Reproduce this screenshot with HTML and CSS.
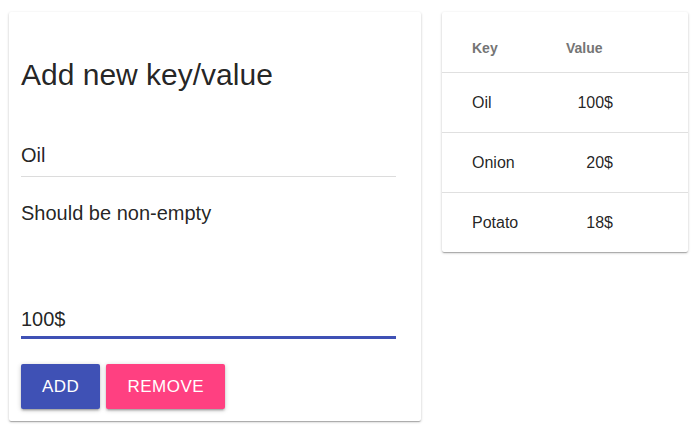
FILE: index.html
```html
<!DOCTYPE html>
<html>
<head>
<meta charset="utf-8">
<link rel="stylesheet" href="styles.css">
</head>
<body>
<div class="page">
  <section class="card form-card">
    <h2 class="title">Add new key/value</h2>
    <div class="field field-key">Oil</div>
    <div class="helper">Should be non-empty</div>
    <div class="field field-value">100$</div>
    <div class="actions">
      <button class="btn btn-add">ADD</button>
      <button class="btn btn-remove">REMOVE</button>
    </div>
  </section>
  <section class="card table-card">
    <table class="kv-table">
      <thead>
        <tr><th class="col-key">Key</th><th class="col-value">Value</th><th class="col-rest"></th></tr>
      </thead>
      <tbody>
        <tr><td class="col-key">Oil</td><td class="col-value num">100$</td><td class="col-rest"></td></tr>
        <tr><td class="col-key">Onion</td><td class="col-value num">20$</td><td class="col-rest"></td></tr>
        <tr><td class="col-key">Potato</td><td class="col-value num">18$</td><td class="col-rest"></td></tr>
      </tbody>
    </table>
  </section>
</div>
</body>
</html>
```

FILE: styles.css
```css
html, body {
  margin: 0;
  padding: 0;
  background: #ffffff;
}
body {
  font-family: "Liberation Sans", Arial, sans-serif;
  color: rgba(0, 0, 0, 0.87);
}
.page {
  display: flex;
  align-items: flex-start;
  gap: 21px;
  padding: 12px 9px;
}
.card {
  background: #fff;
  border-radius: 2px;
  box-shadow: 0 1px 3px rgba(0,0,0,0.2), 0 1px 1px rgba(0,0,0,0.14), 0 2px 1px -1px rgba(0,0,0,0.12);
}
.form-card {
  width: 412px;
  box-sizing: border-box;
  padding: 12px 25px 12px 12px;
}
.title {
  margin: 33px 0 0;
  font-size: 30px;
  font-weight: 400;
  line-height: 36px;
}
.field {
  font-size: 20px;
  line-height: 24px;
}
.field-key {
  margin-top: 50px;
  padding-bottom: 9px;
  border-bottom: 1px solid #dcdcdc;
}
.helper {
  margin-top: 24px;
  font-size: 20px;
  line-height: 24px;
}
.field-value {
  margin-top: 82px;
  padding-bottom: 5px;
  border-bottom: 3px solid #3f51b5;
}
.actions {
  display: flex;
  gap: 6px;
  margin-top: 25px;
}
.btn {
  height: 45px;
  padding: 0 21px;
  border: none;
  border-radius: 2px;
  color: #fff;
  font-family: "Liberation Sans", Arial, sans-serif;
  font-size: 17px;
  letter-spacing: 0.5px;
  box-shadow: 0 1px 5px rgba(0,0,0,0.2), 0 2px 2px rgba(0,0,0,0.14), 0 3px 1px -2px rgba(0,0,0,0.12);
}
.btn-add { background: #3f51b5; }
.btn-remove { background: #ff4081; }

.table-card {
  width: 246px;
  padding-top: 12px;
}
.kv-table {
  width: 100%;
  border-collapse: collapse;
}
.kv-table th {
  height: 48px;
  padding: 0;
  font-size: 14px;
  font-weight: 700;
  color: #757575;
  text-align: left;
  border-bottom: 1px solid #e0e0e0;
}
.kv-table td {
  height: 59px;
  padding: 0;
  font-size: 16px;
  border-bottom: 1px solid #e0e0e0;
}
.kv-table tbody tr:last-child td {
  border-bottom: none;
}
.col-key {
  padding-left: 30px !important;
  width: 94px;
}
.col-value {
  width: 47px;
}
.num {
  text-align: right;
}
```
